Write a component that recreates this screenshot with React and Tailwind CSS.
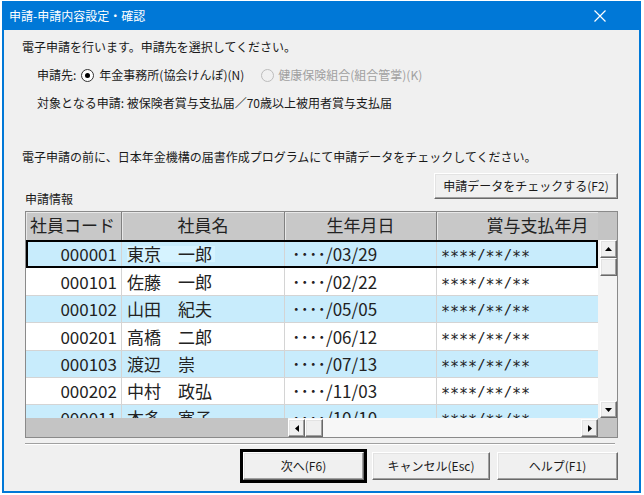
import React from "react";

const btn3d =
  "bg-[#f0f0f0] border border-t-white border-l-white border-r-[#696969] border-b-[#696969] shadow-[inset_-1px_-1px_0_#a0a0a0,inset_1px_1px_0_#e3e3e3]";

const rows = [
  { code: "000001", name: "東京　一郎", date: "03/29", h: "h-[28px]", bg: "bg-[#c8ecfc]", sel: true },
  { code: "000101", name: "佐藤　一郎", date: "02/22", h: "h-[28px]", bg: "bg-white" },
  { code: "000102", name: "山田　紀夫", date: "05/05", h: "h-[27px]", bg: "bg-[#c8ecfc]" },
  { code: "000201", name: "高橋　二郎", date: "06/12", h: "h-[28px]", bg: "bg-white" },
  { code: "000103", name: "渡辺　崇", date: "07/13", h: "h-[27px]", bg: "bg-[#c8ecfc]" },
  { code: "000202", name: "中村　政弘", date: "11/03", h: "h-[27px]", bg: "bg-white" },
  { code: "000011", name: "本多　寛子", date: "10/10", h: "h-[27px]", bg: "bg-[#c8ecfc]" },
];

function Tri({ dir }) {
  const pts = {
    up: "0,4 7,4 3.5,0",
    down: "0,0 7,0 3.5,4",
    left: "4,0 4,7 0,3.5",
    right: "0,0 0,7 4,3.5",
  }[dir];
  const w = dir === "up" || dir === "down" ? 7 : 4;
  const h = dir === "up" || dir === "down" ? 4 : 7;
  return (
    <svg width={w} height={h} viewBox={`0 0 ${w} ${h}`}>
      <polygon points={pts} fill="#000" />
    </svg>
  );
}

function Stars({ children }) {
  return <span className="relative top-[3px] text-[15px]">{children}</span>;
}

export default function App() {
  return (
    <div className="w-[644px] h-[495px] bg-white overflow-hidden font-['Noto_Sans_CJK_JP',sans-serif] text-[#1a1a1a]">
      <div className="ml-[2px] mt-[1px] w-[639px] h-[492px] bg-[#0078d7] flex flex-col px-[2px] pb-[2px]">
        {/* title bar */}
        <div className="h-[29px] flex items-center justify-between pl-[5px] pr-[33px] text-white text-[12px]">
          <span className="leading-[16px]">申請-申請内容設定・確認</span>
          <svg width="12" height="12" viewBox="0 0 12 12">
            <path d="M0.5 0.5 L11.5 11.5 M11.5 0.5 L0.5 11.5" stroke="#fff" strokeWidth="1.2" />
          </svg>
        </div>
        {/* client */}
        <div className="flex-1 bg-[#f0f0f0] flex flex-col pl-[18px] pt-[9px] text-[12px] leading-[16px]">
          <div>電子申請を行います。申請先を選択してください。</div>
          <div className="mt-[10px] h-[20px] flex items-center pl-[15px]">
            <span>申請先:</span>
            <span className="ml-[5px] w-[13px] h-[13px] rounded-full border border-[#333] bg-white flex items-center justify-center">
              <span className="w-[5px] h-[5px] rounded-full bg-black"></span>
            </span>
            <span className="ml-[5px]">年金事務所(協会けんぽ)(N)</span>
            <span className="ml-[17px] w-[13px] h-[13px] rounded-full border border-[#bcbcbc] bg-[#f0f0f0]"></span>
            <span className="ml-[4px] text-[#a0a0a0]">健康保険組合(組合管掌)(K)</span>
          </div>
          <div className="mt-[10px] pl-[15px]">対象となる申請: 被保険者賞与支払届／70歳以上被用者賞与支払届</div>
          <div className="mt-[38px]">電子申請の前に、日本年金機構の届書作成プログラムにて申請データをチェックしてください。</div>
          <div className="mt-[8px] h-[34px] flex items-start justify-between pr-[21px]">
            <span className="mt-[18px] ml-[3px]">申請情報</span>
            <button className={`w-[184px] h-[26px] ${btn3d} text-[12px] leading-[16px] text-[#1a1a1a]`}>
              申請データをチェックする(F2)
            </button>
          </div>
          {/* grid */}
          <div className="mt-[4px] ml-[3px] w-[593px] h-[227px] border border-[#8a8a8a] bg-[#c4c4c4] flex flex-col">
            {/* header */}
            <div className="h-[28px] flex">
              <div className="w-[572px] flex overflow-hidden text-[17px] leading-[26px] text-[#222]">
                <div className="w-[96px] shrink-0 bg-[#c8c8c8] border-r border-[#808080] shadow-[inset_1px_1px_0_#e8e8e8] pl-[4px] whitespace-nowrap">社員コード</div>
                <div className="w-[163px] shrink-0 bg-[#c8c8c8] border-r border-[#808080] shadow-[inset_1px_1px_0_#e8e8e8] text-center">社員名</div>
                <div className="w-[152px] shrink-0 bg-[#c8c8c8] border-r border-[#808080] shadow-[inset_1px_1px_0_#e8e8e8] text-center">生年月日</div>
                <div className="w-[202px] shrink-0 bg-[#c8c8c8] border-r border-[#808080] shadow-[inset_1px_1px_0_#e8e8e8] text-center">賞与支払年月</div>
              </div>
              <div className="flex-1 bg-[#c4c4c4]"></div>
            </div>
            {/* body */}
            <div className="h-[178px] flex">
              <div className="w-[572px] overflow-hidden flex flex-col text-[17px] text-[#222]">
                {rows.map((r) => (
                  <div
                    key={r.code}
                    className={`${r.h} shrink-0 flex border-b border-[#d4d4d4] ${r.bg} ${r.sel ? "outline-2 outline-black -outline-offset-2" : ""}`}
                  >
                    <div className="w-[96px] shrink-0 border-r border-[#d4d4d4] flex items-center justify-end pr-[4px]">{r.code}</div>
                    <div className="w-[163px] shrink-0 border-r border-[#d4d4d4] flex items-center pl-[5px]">
                      <span className={r.sel ? "bg-[#d6f3ff] pr-[3px]" : ""}>{r.name}</span>
                    </div>
                    <div className="w-[152px] shrink-0 border-r border-[#d4d4d4] flex items-center pl-[7px]">
                      ････/{r.date}
                    </div>
                    <div className="w-[161px] shrink-0 flex items-center pl-[4px] whitespace-nowrap font-['DejaVu_Sans_Mono',monospace] text-[14px]">
                      <Stars>****</Stars>/<Stars>**</Stars>/<Stars>**</Stars>
                    </div>
                  </div>
                ))}
              </div>
              {/* vertical scrollbar */}
              <div className="w-[19px] flex flex-col bg-[#f4f4f4] pl-[2px]">
                <div className={`h-[18px] ${btn3d} flex items-center justify-center`}>
                  <Tri dir="up" />
                </div>
                <div className={`h-[18px] ${btn3d}`}></div>
                <div className="flex-1"></div>
                <div className={`h-[17px] ${btn3d} flex items-center justify-center`}>
                  <Tri dir="down" />
                </div>
              </div>
            </div>
            {/* horizontal scrollbar */}
            <div className="h-[19px] flex">
              <div className="w-[262px] bg-[#c4c4c4]"></div>
              <div className="w-[310px] flex bg-[#f7f7f7] pt-[1px]">
                <div className={`w-[17px] ${btn3d} flex items-center justify-center`}>
                  <Tri dir="left" />
                </div>
                <div className={`w-[18px] ${btn3d}`}></div>
                <div className="flex-1"></div>
                <div className={`w-[17px] ${btn3d} flex items-center justify-center`}>
                  <Tri dir="right" />
                </div>
              </div>
              <div className="flex-1 bg-[#c4c4c4]"></div>
            </div>
          </div>
          {/* separator */}
          <div className="mt-[5px] ml-[3px] w-[590px] h-[2px] border-t border-[#a0a0a0] border-b border-b-white"></div>
          {/* buttons */}
          <div className="mt-[4px] h-[34px] flex items-center justify-end pr-[21px]">
            <div className="w-[127px] h-[34px] border-[3px] border-black">
              <button className={`w-full h-full ${btn3d} text-[12px] leading-[16px] text-[#1a1a1a]`}>次へ(F6)</button>
            </div>
            <button className={`ml-[5px] w-[118px] h-[28px] ${btn3d} text-[12px] leading-[16px] text-[#1a1a1a]`}>キャンセル(Esc)</button>
            <button className={`ml-[7px] w-[121px] h-[28px] ${btn3d} text-[12px] leading-[16px] text-[#1a1a1a]`}>ヘルプ(F1)</button>
          </div>
        </div>
      </div>
    </div>
  );
}
